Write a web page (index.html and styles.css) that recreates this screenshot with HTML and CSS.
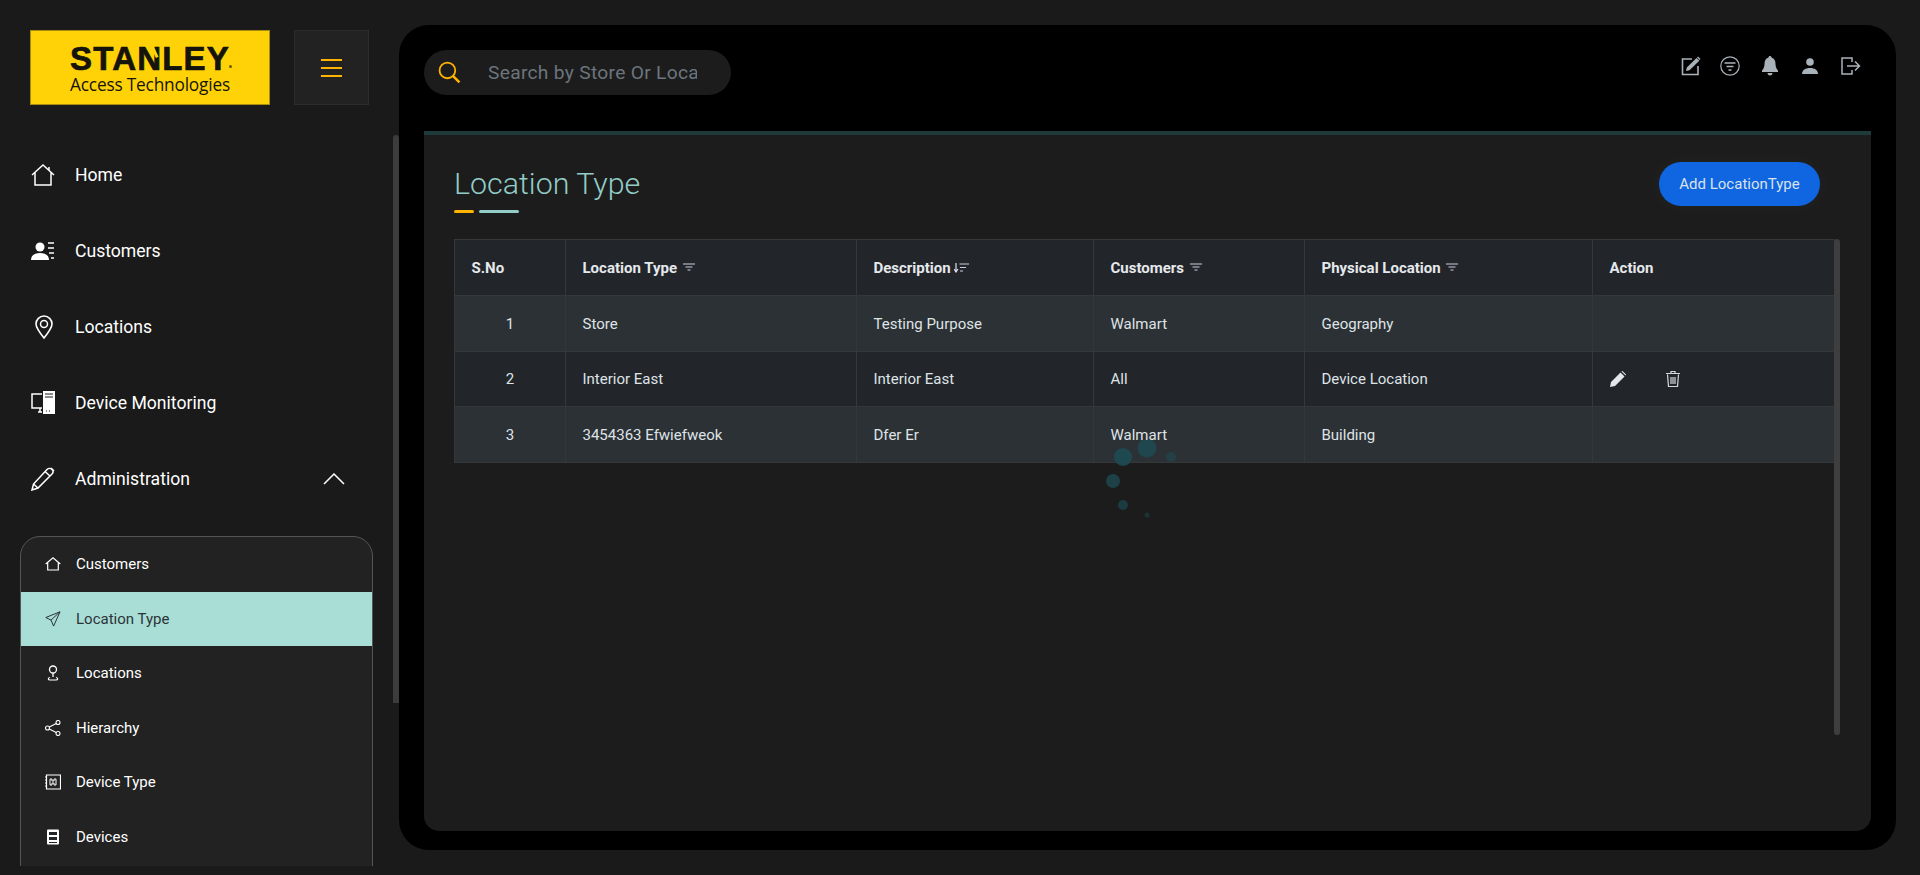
FILE: index.html
```html
<!DOCTYPE html>
<html lang="en">
<head>
  <meta charset="UTF-8" />
  <meta name="viewport" content="width=device-width, initial-scale=1" />
  <title>Location Type</title>
  <link rel="stylesheet" href="styles.css">
</head>
<body>
  <div class="app">
    <aside class="sidebar">
      <div class="brand">
        <div class="logo">
          <span class="logo-name">STANLEY<i class="logo-notch"></i><i class="logo-reg"></i></span>
          <span class="logo-sub">Access Technologies</span>
        </div>
        <button class="menu-btn">
          <span></span><span></span><span></span>
        </button>
      </div>

      <nav class="nav">
        <a class="nav-item">
          <svg class="nav-icon" viewBox="0 0 24 22"><path d="M1 11 12 1l11 10M4 8.500V21h16V8.500M18 3v3" fill="none" stroke="#fff" stroke-width="1.500"/></svg>
          Home
        </a>
        <a class="nav-item">
          <svg class="nav-icon" viewBox="0 0 24 18"><circle cx="9" cy="5" r="4.500" fill="#fff"/><path d="M0 18c0-5 4-7 9-7s9 2 9 7z" fill="#fff"/><path d="M17 1h6M17 6h6M18 11h5M20 16h3" stroke="#fff" stroke-width="1.500"/></svg>
          Customers
        </a>
        <a class="nav-item">
          <svg class="nav-icon nav-icon-pin" viewBox="0 0 20 24"><path d="M10 23C6 18 2 13 2 9a8 8 0 0 1 16 0c0 4-4 9-8 14z" fill="none" stroke="#fff" stroke-width="1.600"/><circle cx="10" cy="9" r="3.500" fill="none" stroke="#fff" stroke-width="1.500"/></svg>
          Locations
        </a>
        <a class="nav-item">
          <svg class="nav-icon" viewBox="0 0 24 24"><path d="M11 3H1v14h10M7 21h4M9 17v4" fill="none" stroke="#fff" stroke-width="1.500"/><path d="M12 0h12v23H12z" fill="#fff"/><path d="M14 3h8M14 6h8" stroke="#1a1a1a" stroke-width="1"/><path d="M15 20h1M18 20h1" stroke="#1a1a1a" stroke-width="1"/></svg>
          Device Monitoring
        </a>
        <a class="nav-item">
          <svg class="nav-icon" viewBox="0 0 24 24"><path d="M1 23l1.500-6L16 2.500c1.500-1.500 3.500-1.500 5 0s1.500 3 0 4.500L7 21zM14 4.500l5.500 5M2.500 17 7 21M20 1l3 3" fill="none" stroke="#fff" stroke-width="1.500"/></svg>
          Administration
          <svg class="nav-caret" viewBox="0 0 22 12"><path d="M1 11 11 1l10 10" fill="none" stroke="#fff" stroke-width="1.500"/></svg>
        </a>
      </nav>

      <div class="subnav">
        <a class="sub-item">
          <svg class="sub-icon" viewBox="0 0 16 14"><path d="M.7 7 8 .8 15.300 7M2.700 5.500V13h10.600V5.500" fill="none" stroke="#fff" stroke-width="1.200"/></svg>
          Customers
        </a>
        <a class="sub-item active">
          <svg class="sub-icon" viewBox="0 0 16 16"><path d="M15 .8.800 6.500l5.200 2.600 2.600 6zM6 9.100 15 .8" fill="none" stroke="#2c3338" stroke-width="1"/></svg>
          Location Type
        </a>
        <a class="sub-item">
          <svg class="sub-icon" viewBox="0 0 16 16"><circle cx="8" cy="4.500" r="3.500" fill="none" stroke="#fff" stroke-width="1.300"/><path d="M8 8v4" stroke="#fff" stroke-width="1.300"/><path d="M5 12.500c-2.500.5-2 2.500 0 2.500h6c2 0 2.500-2 0-2.500" fill="none" stroke="#fff" stroke-width="1.200"/></svg>
          Locations
        </a>
        <a class="sub-item">
          <svg class="sub-icon" viewBox="0 0 16 16"><circle cx="2.500" cy="8" r="2" fill="none" stroke="#fff" stroke-width="1.100"/><circle cx="13" cy="2.500" r="2" fill="none" stroke="#fff" stroke-width="1.100"/><circle cx="13" cy="13.500" r="2" fill="none" stroke="#fff" stroke-width="1.100"/><path d="M4.300 7 11.200 3.400M4.300 9l6.900 3.600" stroke="#fff" stroke-width="1.100"/></svg>
          Hierarchy
        </a>
        <a class="sub-item">
          <svg class="sub-icon" viewBox="0 0 16 16"><path d="M1.500 1h14v14h-14z" fill="none" stroke="#fff" stroke-width="1.200"/><path d="M0 3h2M0 6h2M0 9h2M0 12h2" stroke="#fff"/><path d="M5 5h2v2h2V5h2v6H9V9H7v2H5z" fill="none" stroke="#fff"/></svg>
          Device Type
        </a>
        <a class="sub-item">
          <svg class="sub-icon" viewBox="0 0 16 16"><rect x="2" y="0.500" width="12" height="15" rx="1" fill="#fff"/><path d="M4 3h8v3H4zM4 8h8v3H4z" fill="#22262b"/><path d="M4 13.500h8" stroke="#22262b"/></svg>
          Devices
        </a>
      </div>
      <div class="side-scroll"></div>
    </aside>

    <main class="main">
      <header class="topbar">
        <div class="search">
          <svg class="search-icon" viewBox="0 0 22 22"><circle cx="9" cy="9" r="7.500" fill="none" stroke="#ffb300" stroke-width="1.700"/><path d="m14.500 14.500 6 6" stroke="#ffb300" stroke-width="2.400"/></svg>
          <input class="search-input" type="text" placeholder="Search by Store Or Location">
        </div>
        <div class="top-icons">
          <svg class="top-icon top-icon-edit" viewBox="0 0 20 20"><path d="M17 10v8.500H1.500V3H11" fill="none" stroke="#aab2b9" stroke-width="1.600"/><path d="M5 15l.8-3.500L15.500 2l2.800 2.800L8.500 14.300zM17 .5l2.500 2.500-1 1L16 1.500z" fill="#aab2b9"/></svg>
          <svg class="top-icon" viewBox="0 0 20 20"><circle cx="10" cy="10" r="9.200" fill="none" stroke="#aab2b9" stroke-width="1.200"/><path d="M4.500 7h11M6.500 10.500h7M8.500 14h3" stroke="#aab2b9" stroke-width="1.500"/></svg>
          <svg class="top-icon top-icon-bell" viewBox="0 0 16 20"><path d="M8 0c1 0 1.500.7 1.500 1.500C12.500 2.500 13.500 5 13.500 8c0 3 1 5 2.500 6.500V16H0v-1.500C1.500 13 2.500 11 2.500 8c0-3 1-5.500 4-6.500C6.500.7 7 0 8 0zM5.500 17h5C10.500 18.500 9.500 19.500 8 19.500S5.500 18.500 5.500 17z" fill="#aab2b9"/></svg>
          <svg class="top-icon top-icon-user" viewBox="0 0 16 16"><circle cx="8" cy="4" r="3.800" fill="#aab2b9"/><path d="M0 16c0-4 3.500-6 8-6s8 2 8 6z" fill="#aab2b9"/></svg>
          <svg class="top-icon" viewBox="0 0 20 18"><path d="M11 5V1H1v16h10v-4" fill="none" stroke="#aab2b9" stroke-width="1.500"/><path d="M6 9h12M14 4.500 18.500 9 14 13.500" fill="none" stroke="#aab2b9" stroke-width="1.500"/></svg>
        </div>
      </header>

      <section class="card">
        <div class="card-head">
          <div>
            <h1 class="title">Location Type</h1>
            <div class="title-line"><span></span><span></span></div>
          </div>
          <button class="add-btn">Add LocationType</button>
        </div>

        <div class="table-wrap">
          <table class="grid">
            <colgroup>
              <col class="col-sno"><col class="col-type"><col class="col-desc"><col class="col-cust"><col class="col-phys"><col class="col-action">
            </colgroup>
            <thead>
              <tr>
                <th>S.No</th>
                <th>Location Type <svg class="sort" viewBox="0 0 12 8"><path d="M0 1h12M2.500 4h7M4.500 7h3" stroke="#ccd" stroke-width="1.200"/></svg></th>
                <th>Description <svg class="sort sort-wide" viewBox="0 0 15 10"><path d="M2 0v8M0 6l2 3 2-3" fill="none" stroke="#dde" stroke-width="1.200"/><path d="M5.500 1H15M6 4.500h6M6 8h3" stroke="#ccd" stroke-width="1.200"/></svg></th>
                <th>Customers <svg class="sort" viewBox="0 0 12 8"><path d="M0 1h12M2.500 4h7M4.500 7h3" stroke="#ccd" stroke-width="1.200"/></svg></th>
                <th>Physical Location <svg class="sort" viewBox="0 0 12 8"><path d="M0 1h12M2.500 4h7M4.500 7h3" stroke="#ccd" stroke-width="1.200"/></svg></th>
                <th>Action</th>
              </tr>
            </thead>
            <tbody>
              <tr>
                <td class="num">1</td><td>Store</td><td>Testing Purpose</td><td>Walmart</td><td>Geography</td><td></td>
              </tr>
              <tr class="row-short">
                <td class="num">2</td><td>Interior East</td><td>Interior East</td><td>All</td><td>Device Location</td>
                <td>
                  <div class="actions">
                    <svg class="act-icon" viewBox="0 0 16 16"><path d="M0 16l1-5L10.500 1.500l4 4L5 15zM11.500.5l1-.5 3.500 3.500-.5 1z" fill="#e4e7ea"/></svg>
                    <svg class="act-icon" viewBox="0 0 14 16"><path d="M0 2.500h14M5 2V.5h4V2M1.500 3.500 2.500 15.500h9l1-12M5 6v7M7 6v7M9 6v7" fill="none" stroke="#d6dadd" stroke-width="1.200"/></svg>
                  </div>
                </td>
              </tr>
              <tr>
                <td class="num">3</td><td>3454363 Efwiefweok</td><td>Dfer Er</td><td>Walmart</td><td>Building</td><td></td>
              </tr>
            </tbody>
          </table>
          <div class="table-scroll"></div>
        </div>

        <svg class="spinner" viewBox="0 0 90 80">
          <circle cx="23" cy="17" r="9" opacity=".9"/>
          <circle cx="47" cy="8" r="9.500" opacity=".8"/>
          <circle cx="71" cy="17" r="5" opacity=".55"/>
          <circle cx="13" cy="41" r="7" opacity=".75"/>
          <circle cx="23" cy="65" r="5" opacity=".65"/>
          <circle cx="47" cy="75" r="2.500" opacity=".45"/>
        </svg>
      </section>
    </main>
  </div>
</body>
</html>
```

FILE: styles.css
```css
* {
  box-sizing: border-box;
  margin: 0;
  padding: 0;
}
body {
  font-family: Roboto, sans-serif;
  background: #1a1a1a;
  color: #fff;
  height: 875px;
  overflow: hidden;
}
.app {
  display: flex;
  height: 875px;
}

/* sidebar */
.sidebar {
  position: relative;
  width: 399px;
  height: 866px;
  padding-top: 30px;
  overflow: hidden;
  flex-shrink: 0;
}
.brand {
  display: flex;
  gap: 24px;
  padding-left: 30px;
}
.logo {
  width: 240px;
  height: 75px;
  background: #ffd207;
  border: 1px solid #a88c10;
  display: flex;
  flex-direction: column;
  align-items: center;
  padding-top: 11px;
  color: #15140a;
}
.logo-name {
  position: relative;
  font-family: "Liberation Sans", sans-serif;
  font-size: 33px;
  font-weight: 700;
  line-height: 33px;
  letter-spacing: 1.2px;
  -webkit-text-stroke: 0.7px #111;
}
.logo-notch {
  position: absolute;
  left: 83px;
  top: 3px;
  width: 2.500px;
  height: 13px;
  background: #ffd207;
  transform: rotate(-25deg);
}
.logo-reg {
  position: absolute;
  right: -2px;
  bottom: 7px;
  width: 3px;
  height: 3px;
  border-radius: 50%;
  background: #6b5b10;
}
.logo-sub {
  font-family: "Open Sans", sans-serif;
  font-size: 17.300px;
  line-height: 19px;
  letter-spacing: -0.2px;
}
.menu-btn {
  width: 75px;
  height: 75px;
  background: #222;
  border: 1px solid #2c2c2c;
  display: flex;
  flex-direction: column;
  justify-content: center;
  align-items: center;
  gap: 6px;
}
.menu-btn span {
  display: block;
  width: 21px;
  height: 2px;
  background: #ffb300;
}
.nav {
  margin-top: 32px;
}
.nav-item {
  height: 76px;
  padding: 0 54px 0 31px;
  display: flex;
  align-items: center;
  font-size: 17.600px;
  color: #fff;
}
.nav-icon {
  width: 24px;
  height: 24px;
  margin-right: 20px;
  flex-shrink: 0;
}
.nav-icon-pin {
  margin-left: 1px;
  margin-right: 19px;
}
.nav-caret {
  width: 22px;
  height: 12px;
  margin-left: auto;
}
.subnav {
  width: 353px;
  margin-top: 19px;
  margin-left: 20px;
  background: #222;
  border: 1px solid #555;
  border-radius: 20px 20px 0 0;
  height: 400px;
}
.sub-item {
  height: 54.500px;
  padding-left: 24px;
  display: flex;
  align-items: center;
  font-size: 15px;
  color: #fff;
}
.sub-item.active {
  background: #a9ded6;
  color: #2c3338;
}
.sub-icon {
  width: 16px;
  height: 16px;
  margin-right: 15px;
}
.side-scroll {
  position: absolute;
  top: 135px;
  right: 0;
  width: 6px;
  height: 568px;
  background: #3c3c3c;
  border-radius: 3px 3px 0 0;
}

/* main panel */
.main {
  flex: 1;
  margin: 25px 25px 25px 0;
  background: #000;
  border-radius: 30px;
  padding: 0 25px 19px;
  display: flex;
  flex-direction: column;
}
.topbar {
  height: 106px;
  padding-top: 25px;
  display: flex;
  justify-content: space-between;
  align-items: flex-start;
}
.search {
  width: 307px;
  height: 45px;
  background: #1c1c1c;
  border-radius: 23px;
  display: flex;
  align-items: center;
  padding-left: 14px;
}
.search-icon {
  width: 23px;
  height: 23px;
  flex-shrink: 0;
}
.search-input {
  width: 209px;
  margin-left: 27px;
  background: transparent;
  border: none;
  outline: none;
  color: #fff;
  font-family: Roboto, sans-serif;
  font-size: 19.200px;
  letter-spacing: 0.3px;
}
.search-input::placeholder {
  color: #6c757d;
  opacity: 1;
}
.top-icons {
  display: flex;
  align-items: center;
  gap: 22px;
  height: 20px;
  margin-top: 6px;
  margin-right: 10px;
}
.top-icon {
  width: 20px;
  height: 20px;
}
.top-icon-edit {
  margin-right: -3px;
}
.top-icon-bell {
  width: 16px;
  margin-right: 2px;
}
.top-icon-user {
  width: 16px;
  height: 16px;
  margin-right: 1px;
}

/* card */
.card {
  position: relative;
  flex: 1;
  background: #1c1c1c;
  border-top: 4px solid #1f3a3a;
  border-radius: 0 0 15px 15px;
  padding: 27px 36px 0 30px;
}
.card-head {
  display: flex;
  justify-content: space-between;
  align-items: flex-start;
  height: 77px;
  padding-right: 15px;
}
.title {
  font-size: 30.400px;
  font-weight: 300;
  line-height: 44px;
  color: #92cdc8;
}
.title-line {
  display: flex;
  gap: 5px;
  margin-top: 4px;
}
.title-line span {
  display: block;
  width: 20px;
  height: 3px;
  border-radius: 2px;
  background: #ffb300;
}
.title-line span + span {
  width: 40px;
  background: #92cdc8;
}
.add-btn {
  width: 161px;
  height: 44px;
  background: #0f66e0;
  color: #d9e2ee;
  border: none;
  border-radius: 22px;
  font-family: Roboto, sans-serif;
  font-size: 15px;
  box-shadow: 0 0 20px rgba(255, 255, 255, 0.04);
}

/* table */
.table-wrap {
  position: relative;
}
.grid {
  width: 1380px;
  border-collapse: collapse;
  table-layout: fixed;
  font-size: 15px;
  color: #dfe3e6;
}
.col-sno { width: 111px; }
.col-type { width: 291px; }
.col-desc { width: 237px; }
.col-cust { width: 211px; }
.col-phys { width: 288px; }
.col-action { width: 242px; }
.grid th,
.grid td {
  height: 56px;
  padding-left: 16.500px;
  border: 1px solid #34383b;
  text-align: left;
  vertical-align: middle;
}
.grid th {
  background: #22262b;
  font-weight: 700;
  color: #e6e9eb;
}
.grid tbody tr {
  background: #2c3135;
}
.grid tbody tr.row-short {
  background: #22262b;
}
.grid .row-short td {
  height: 55px;
}
.grid td.num {
  padding-left: 0;
  text-align: center;
}
.sort {
  width: 12px;
  height: 8px;
  margin-left: 2px;
  vertical-align: 2px;
}
.sort-wide {
  width: 15px;
  height: 10px;
  margin-left: 0;
  vertical-align: 0;
}
.actions {
  display: flex;
  align-items: center;
  gap: 39px;
}
.act-icon {
  width: 16px;
  height: 16px;
}
.table-scroll {
  position: absolute;
  top: 0;
  left: 1380px;
  width: 6px;
  height: 496px;
  background: #3e3e3e;
  border-radius: 3px;
}
.spinner {
  position: absolute;
  left: 676px;
  top: 305px;
  width: 90px;
  height: 80px;
  fill: #1d4d54;
}
```
